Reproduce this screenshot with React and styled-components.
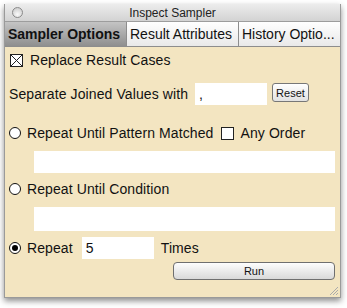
import styled, { createGlobalStyle } from 'styled-components';

const Global = createGlobalStyle`
  body {
    margin: 0;
    background: #ffffff;
    font-family: "Liberation Sans", Arial, sans-serif;
  }
`;

const Page = styled.div`
  padding: 4px 6px 10px 4px;
`;

const Window = styled.div`
  width: 337px;
  height: 294px;
  display: flex;
  flex-direction: column;
  box-shadow: 0 3px 6px rgba(0, 0, 0, 0.45);
  border: 1px solid #9a9a9a;
  border-top: none;
  box-sizing: border-box;
`;

const TitleBar = styled.div`
  height: 17px;
  display: flex;
  align-items: center;
  justify-content: center;
  position: relative;
  background: linear-gradient(#ececec, #d3d3d3);
  border-bottom: 1px solid #9d9d9d;
  font-size: 12px;
  color: #222;
`;

const CloseDot = styled.span`
  position: absolute;
  left: 7px;
  top: 3px;
  width: 9px;
  height: 9px;
  border-radius: 50%;
  border: 1px solid #8a8a8a;
  background: radial-gradient(circle at 50% 70%, #fafafa, #c4c4c4);
`;

const TabBar = styled.div`
  display: flex;
  height: 24px;
  border-bottom: 1px solid #8d8d8d;
`;

const Tab = styled.div`
  width: ${(p) => p.w}px;
  display: flex;
  align-items: center;
  padding-left: 3px;
  box-sizing: border-box;
  font-size: 14px;
  font-weight: ${(p) => (p.active ? 'bold' : 'normal')};
  color: #111;
  white-space: nowrap;
  overflow: hidden;
  border-right: 1px solid #8d8d8d;
  background: ${(p) =>
    p.active
      ? 'linear-gradient(#c4c4c4, #8f8f8f)'
      : 'linear-gradient(#ffffff, #e9e9e9)'};
  &:last-child {
    border-right: none;
  }
`;

const Content = styled.div`
  flex: 1;
  background: #f3e5c1;
  display: flex;
  flex-direction: column;
  padding: 4px 5px 0 4px;
  font-size: 14px;
  letter-spacing: 0.1px;
  color: #111;
  position: relative;
`;

const Row = styled.div`
  display: flex;
  align-items: center;
  height: ${(p) => p.h || 18}px;
  margin-top: ${(p) => p.mt || 0}px;
`;

const Check = styled.span`
  width: 11px;
  height: 11px;
  border: 1px solid #222;
  background: #fff;
  margin-right: ${(p) => p.mr || 7}px;
  margin-left: ${(p) => p.ml || 0}px;
  display: inline-flex;
`;

const Radio = styled.span`
  width: 10px;
  height: 10px;
  border-radius: 50%;
  border: 1.5px solid #111;
  background: #fff;
  margin-right: 6px;
  display: inline-flex;
  align-items: center;
  justify-content: center;
  &::after {
    content: '';
    width: 6px;
    height: 6px;
    border-radius: 50%;
    background: ${(p) => (p.on ? '#000' : 'transparent')};
  }
`;

const Field = styled.div`
  background: #fff;
  height: ${(p) => p.h || 22}px;
  width: ${(p) => (p.w ? p.w + 'px' : 'auto')};
  margin-left: ${(p) => p.ml || 0}px;
  margin-top: ${(p) => p.mt || 0}px;
  box-sizing: border-box;
  padding-left: 4px;
  display: flex;
  align-items: center;
  font-size: 14px;
`;

const Reset = styled.div`
  margin-left: 5px;
  align-self: flex-start;
  height: 17px;
  padding: 0 3px;
  border: 1px solid #777;
  border-radius: 3px;
  background: linear-gradient(#ffffff, #e2e2e2);
  font-size: 11px;
  letter-spacing: 0;
  display: flex;
  align-items: center;
`;

const RunButton = styled.div`
  margin-left: 164px;
  width: 162px;
  height: 18px;
  border: 1px solid #6f6f6f;
  border-radius: 4px;
  background: linear-gradient(#fdfdfd, #d9d9d9);
  box-sizing: border-box;
  display: flex;
  align-items: center;
  justify-content: center;
  font-size: 11px;
  letter-spacing: 0;
`;

const Grip = styled.svg`
  position: absolute;
  right: 1px;
  bottom: 1px;
`;

export default function App() {
  return (
    <Page>
      <Global />
      <Window>
        <TitleBar>
          <CloseDot />
          Inspect Sampler
        </TitleBar>
        <TabBar>
          <Tab active w={122}>Sampler Options</Tab>
          <Tab w={112}>Result Attributes</Tab>
          <Tab w={101}>History Optio...</Tab>
        </TabBar>
        <Content>
          <Row h={16} mt={1}>
            <Check mr={7} ml={1}>
              <svg width="11" height="11" viewBox="0 0 11 11">
                <path d="M0 0L11 11M11 0L0 11" stroke="#222" strokeWidth="1" />
              </svg>
            </Check>
            Replace Result Cases
          </Row>
          <Row h={22} mt={15}>
            <span>Separate Joined Values with</span>
            <Field w={72} ml={7}>,</Field>
            <Reset>Reset</Reset>
          </Row>
          <Row h={18} mt={19}>
            <Radio />
            Repeat Until Pattern Matched
            <Check ml={8} mr={6} />
            Any Order
          </Row>
          <Field h={22} ml={25} mt={9} />
          <Row h={18} mt={7}>
            <Radio />
            Repeat Until Condition
          </Row>
          <Field h={24} ml={25} mt={9} />
          <Row h={22} mt={6}>
            <Radio on />
            Repeat
            <Field w={72} ml={9}>5</Field>
            <span style={{ marginLeft: 7 }}>Times</span>
          </Row>
          <Row h={18} mt={3}>
            <RunButton>Run</RunButton>
          </Row>
          <Grip width="10" height="10" viewBox="0 0 10 10">
            <path d="M9 1L1 9M9 4L4 9M9 7L7 9" stroke="#aaa" strokeWidth="1" />
          </Grip>
        </Content>
      </Window>
    </Page>
  );
}
